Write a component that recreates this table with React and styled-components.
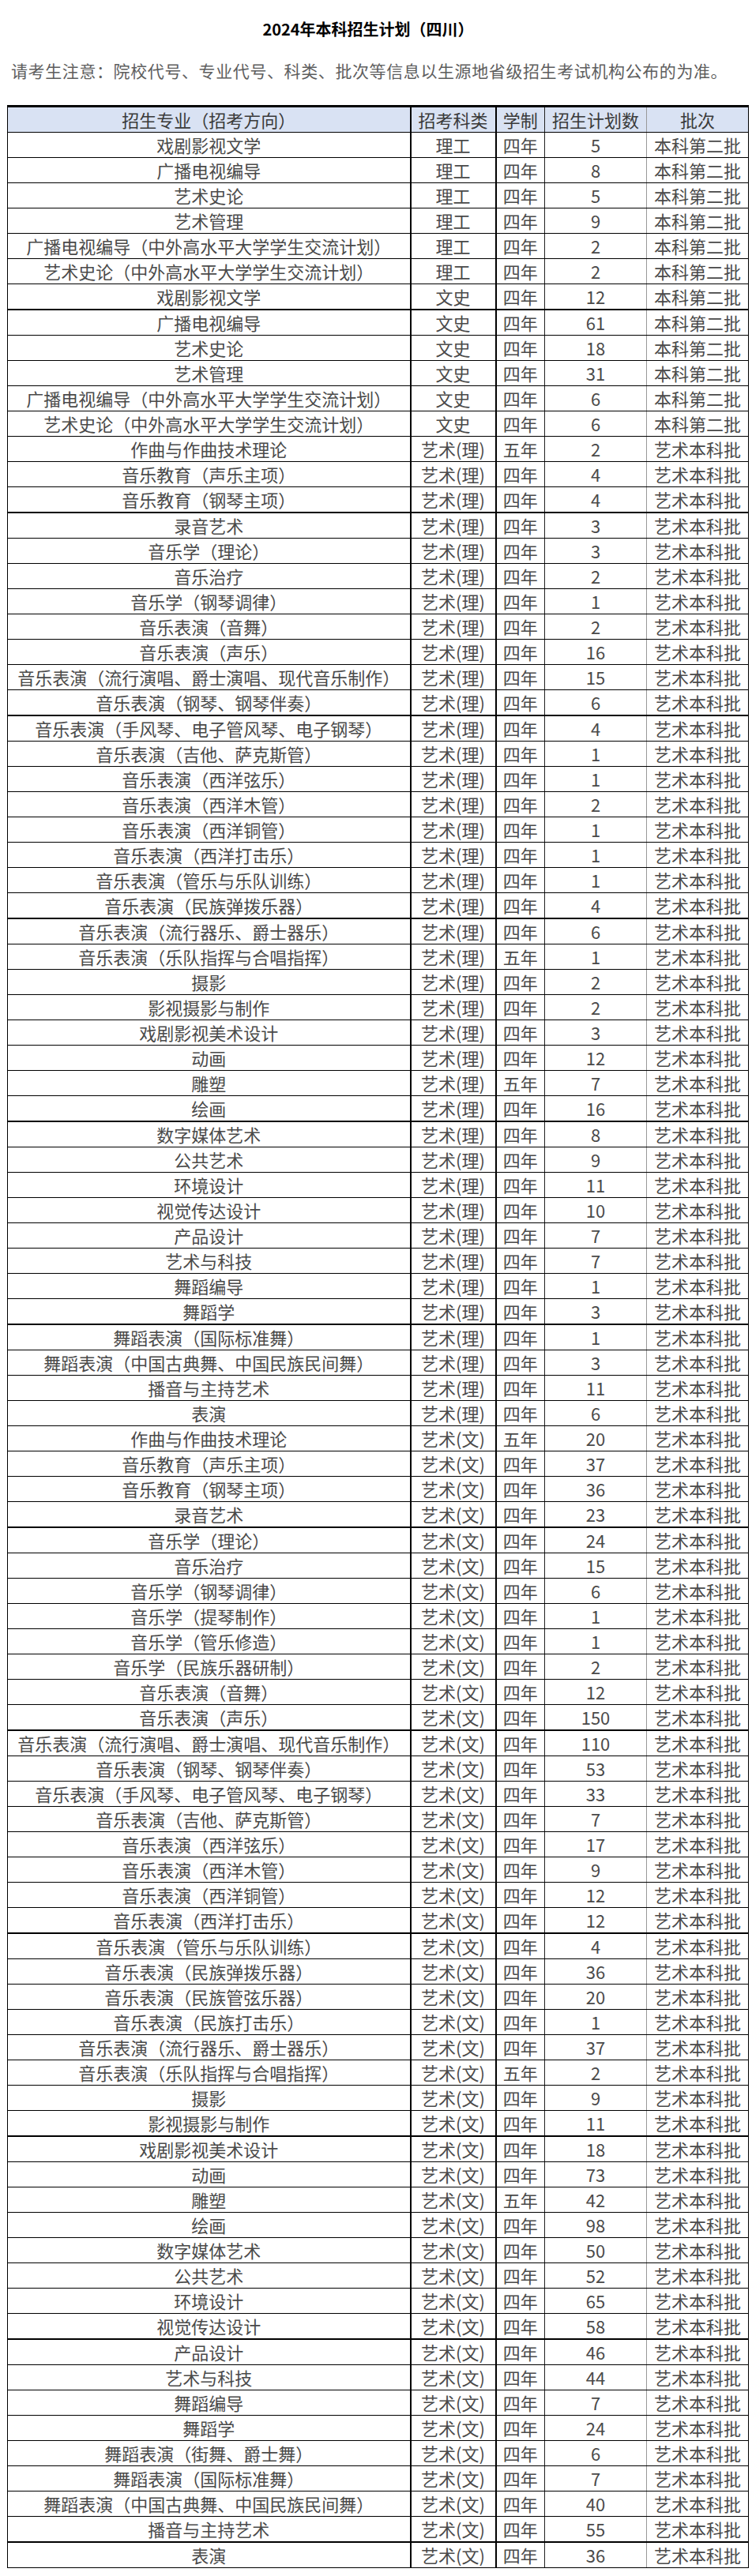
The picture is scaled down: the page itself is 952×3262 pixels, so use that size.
import React from 'react';
import styled, { createGlobalStyle } from 'styled-components';

const Global = createGlobalStyle`
  html, body { margin: 0; padding: 0; background: #fff; }
  body { font-family: "Noto Sans CJK SC", "Noto Sans", sans-serif; }
`;

const Page = styled.div`
  width: 952px;
  padding: 23px 5px 13px 9px;
  box-sizing: border-box;
`;

const Title = styled.h1`
  margin: 0;
  padding-right: 24px;
  text-align: center;
  font-size: 20px;
  line-height: 28px;
  font-weight: 700;
  color: #000;
`;

const Notice = styled.p`
  margin: 23px 0 29px;
  padding-left: 5px;
  font-size: 21px;
  letter-spacing: 0.6px;
  line-height: 30px;
  color: #5e5e5e;
  white-space: nowrap;
`;

const Table = styled.table`
  width: 938px;
  border-collapse: collapse;
  table-layout: fixed;
  border-top: 3px solid #000;
`;

const HeadCell = styled.th`
  height: 31px;
  padding: 0;
  background: #d9e2f3;
  color: #3a3a3a;
  font-size: 22px;
  font-weight: 400;
  line-height: 31px;
  text-align: center;
  white-space: nowrap;
  border-bottom: 1px solid #000;
  border-left: ${p => p.$edge};
`;

const Cell = styled.td`
  height: 31px;
  padding: 0;
  color: #4a4a4a;
  font-size: 22px;
  line-height: 31px;
  text-align: center;
  white-space: nowrap;
  border-bottom: ${p => (p.$thick ? '2px solid #000' : '1px solid #000')};
  border-left: ${p => p.$edge};
`;

const EDGES = [
  '1px solid #000',
  '2px solid #000',
  '2px solid #000',
  '1px solid #222',
  '1px solid #999',
];
const RIGHT = '1px solid #000';

const WIDTHS = [510, 108, 62, 129, 129];

const LongTag = '（中外高水平大学学生交流计划）';

const std = (type, batch) => (list) =>
  list.map(([name, n, y]) => [name, type, y || '四年', n, batch]);

const rows = [
  ...std('理工', '本科第二批')([
    ['戏剧影视文学', 5],
    ['广播电视编导', 8],
    ['艺术史论', 5],
    ['艺术管理', 9],
    ['广播电视编导' + LongTag, 2],
    ['艺术史论' + LongTag, 2],
  ]),
  ...std('文史', '本科第二批')([
    ['戏剧影视文学', 12],
    ['广播电视编导', 61],
    ['艺术史论', 18],
    ['艺术管理', 31],
    ['广播电视编导' + LongTag, 6],
    ['艺术史论' + LongTag, 6],
  ]),
  ...std('艺术(理)', '艺术本科批')([
    ['作曲与作曲技术理论', 2, '五年'],
    ['音乐教育（声乐主项）', 4],
    ['音乐教育（钢琴主项）', 4],
    ['录音艺术', 3],
    ['音乐学（理论）', 3],
    ['音乐治疗', 2],
    ['音乐学（钢琴调律）', 1],
    ['音乐表演（音舞）', 2],
    ['音乐表演（声乐）', 16],
    ['音乐表演（流行演唱、爵士演唱、现代音乐制作）', 15],
    ['音乐表演（钢琴、钢琴伴奏）', 6],
    ['音乐表演（手风琴、电子管风琴、电子钢琴）', 4],
    ['音乐表演（吉他、萨克斯管）', 1],
    ['音乐表演（西洋弦乐）', 1],
    ['音乐表演（西洋木管）', 2],
    ['音乐表演（西洋铜管）', 1],
    ['音乐表演（西洋打击乐）', 1],
    ['音乐表演（管乐与乐队训练）', 1],
    ['音乐表演（民族弹拨乐器）', 4],
    ['音乐表演（流行器乐、爵士器乐）', 6],
    ['音乐表演（乐队指挥与合唱指挥）', 1, '五年'],
    ['摄影', 2],
    ['影视摄影与制作', 2],
    ['戏剧影视美术设计', 3],
    ['动画', 12],
    ['雕塑', 7, '五年'],
    ['绘画', 16],
    ['数字媒体艺术', 8],
    ['公共艺术', 9],
    ['环境设计', 11],
    ['视觉传达设计', 10],
    ['产品设计', 7],
    ['艺术与科技', 7],
    ['舞蹈编导', 1],
    ['舞蹈学', 3],
    ['舞蹈表演（国际标准舞）', 1],
    ['舞蹈表演（中国古典舞、中国民族民间舞）', 3],
    ['播音与主持艺术', 11],
    ['表演', 6],
  ]),
  ...std('艺术(文)', '艺术本科批')([
    ['作曲与作曲技术理论', 20, '五年'],
    ['音乐教育（声乐主项）', 37],
    ['音乐教育（钢琴主项）', 36],
    ['录音艺术', 23],
    ['音乐学（理论）', 24],
    ['音乐治疗', 15],
    ['音乐学（钢琴调律）', 6],
    ['音乐学（提琴制作）', 1],
    ['音乐学（管乐修造）', 1],
    ['音乐学（民族乐器研制）', 2],
    ['音乐表演（音舞）', 12],
    ['音乐表演（声乐）', 150],
    ['音乐表演（流行演唱、爵士演唱、现代音乐制作）', 110],
    ['音乐表演（钢琴、钢琴伴奏）', 53],
    ['音乐表演（手风琴、电子管风琴、电子钢琴）', 33],
    ['音乐表演（吉他、萨克斯管）', 7],
    ['音乐表演（西洋弦乐）', 17],
    ['音乐表演（西洋木管）', 9],
    ['音乐表演（西洋铜管）', 12],
    ['音乐表演（西洋打击乐）', 12],
    ['音乐表演（管乐与乐队训练）', 4],
    ['音乐表演（民族弹拨乐器）', 36],
    ['音乐表演（民族管弦乐器）', 20],
    ['音乐表演（民族打击乐）', 1],
    ['音乐表演（流行器乐、爵士器乐）', 37],
    ['音乐表演（乐队指挥与合唱指挥）', 2, '五年'],
    ['摄影', 9],
    ['影视摄影与制作', 11],
    ['戏剧影视美术设计', 18],
    ['动画', 73],
    ['雕塑', 42, '五年'],
    ['绘画', 98],
    ['数字媒体艺术', 50],
    ['公共艺术', 52],
    ['环境设计', 65],
    ['视觉传达设计', 58],
    ['产品设计', 46],
    ['艺术与科技', 44],
    ['舞蹈编导', 7],
    ['舞蹈学', 24],
    ['舞蹈表演（街舞、爵士舞）', 6],
    ['舞蹈表演（国际标准舞）', 7],
    ['舞蹈表演（中国古典舞、中国民族民间舞）', 40],
    ['播音与主持艺术', 55],
    ['表演', 36],
  ]),
];

const HEADERS = ['招生专业（招考方向）', '招考科类', '学制', '招生计划数', '批次'];

export default function App() {
  return (
    <Page>
      <Global />
      <Title>2024年本科招生计划（四川）</Title>
      <Notice>请考生注意：院校代号、专业代号、科类、批次等信息以生源地省级招生考试机构公布的为准。</Notice>
      <Table>
        <colgroup>
          {WIDTHS.map((w, i) => (
            <col key={i} style={{ width: w }} />
          ))}
        </colgroup>
        <thead>
          <tr>
            {HEADERS.map((h, i) => (
              <HeadCell key={h} $edge={EDGES[i]} style={i === 4 ? { borderRight: RIGHT } : undefined}>
                {h}
              </HeadCell>
            ))}
          </tr>
        </thead>
        <tbody>
          {rows.map((r, ri) => (
            <tr key={ri}>
              {r.map((v, ci) => (
                <Cell
                  key={ci}
                  $edge={EDGES[ci]}
                  $thick={ri % 8 === 6}
                  style={ci === 4 ? { borderRight: RIGHT } : undefined}
                >
                  {v}
                </Cell>
              ))}
            </tr>
          ))}
        </tbody>
      </Table>
    </Page>
  );
}
